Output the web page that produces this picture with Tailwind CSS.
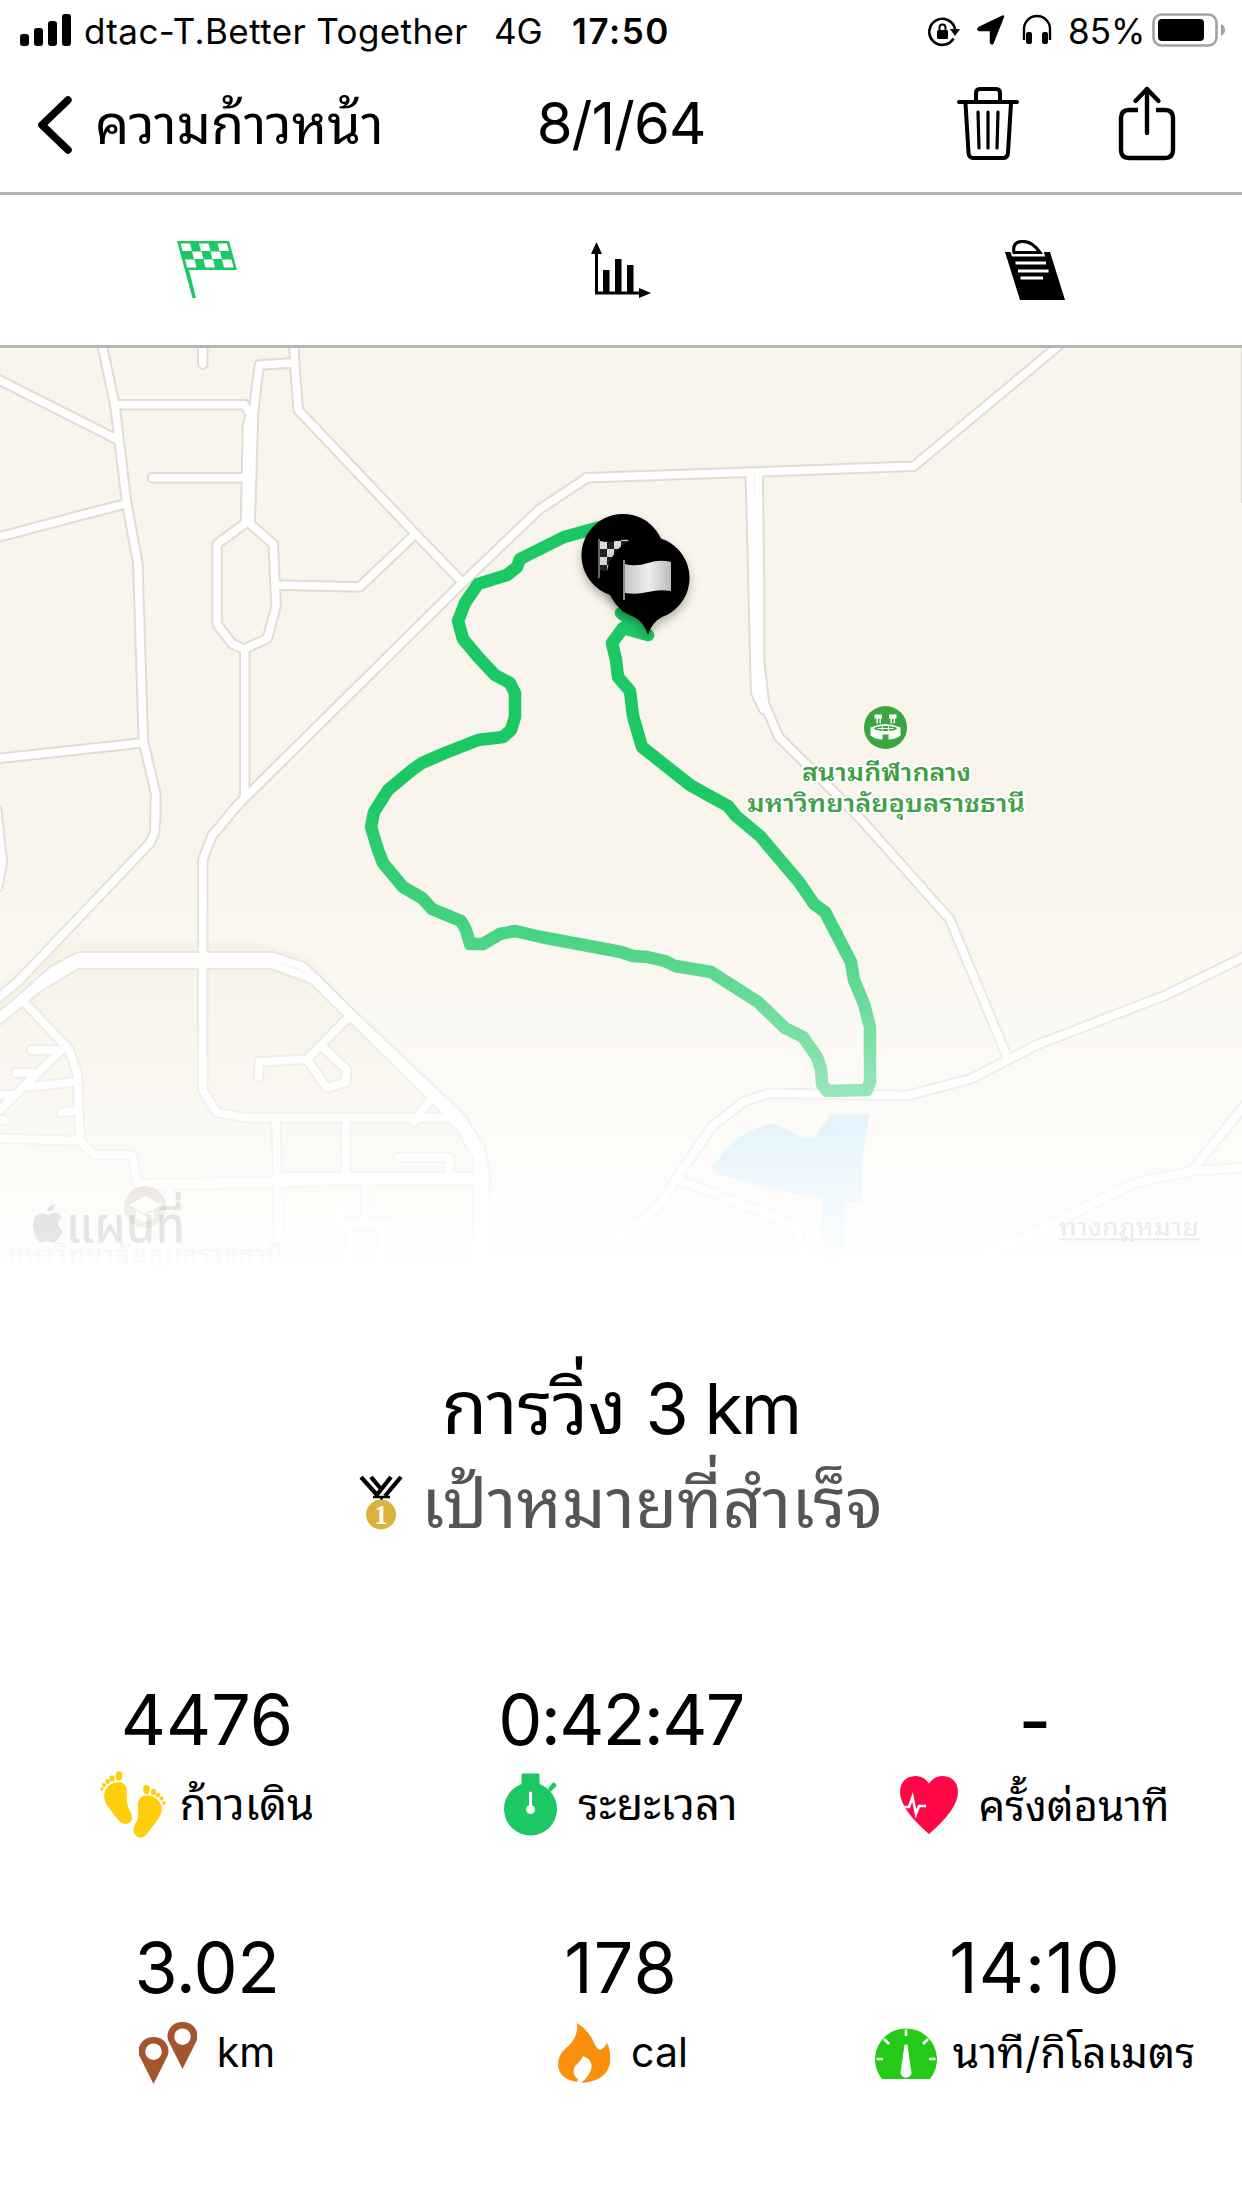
<!DOCTYPE html>
<html lang="th">
<head>
<meta charset="utf-8">
<title>8/1/64</title>
<script src="https://cdn.jsdelivr.net/npm/@tailwindcss/browser@4"></script>
</head>
<body class="w-[1242px] h-[2208px] overflow-hidden bg-white text-black font-['Inter','Noto_Sans_Thai_Looped','Loma','Garuda','Waree','Noto_Sans_Thai','Noto_Sans',sans-serif]">
<div class="flex flex-col w-[1242px] h-[2208px]">

<!-- status bar -->
<header class="flex items-center h-16 pl-5 pr-4 text-[35px] leading-none shrink-0">
  <svg class="-mt-1 w-[52px] h-8 shrink-0" viewBox="0 0 52 32"><rect x="0" y="20" width="9" height="12" rx="3"/><rect x="14" y="14" width="9" height="18" rx="3"/><rect x="28" y="7" width="9" height="25" rx="3"/><rect x="42" y="0" width="9" height="32" rx="3"/></svg>
  <span class="ml-3 -mt-0.5 w-[386px] whitespace-nowrap tracking-[0.4px]">dtac-T.Better Together</span>
  <span class="ml-[24px] -mt-0.5 w-[50px] whitespace-nowrap">4G</span>
  <span class="ml-[28px] -mt-0.5 font-semibold whitespace-nowrap tracking-[1.6px]">17:50</span>
  <div class="ml-auto flex items-center">
    <svg class="w-8 h-8" viewBox="0 0 32 32"><path d="M25.5 22.5A13 13 0 1 1 27 13" fill="none" stroke="#000" stroke-width="2.6"/><path d="M22 13h10l-5 7z"/><rect x="9" y="14" width="11" height="9" rx="1.5"/><path d="M11.500 14v-2.500a3 3 0 0 1 6 0v2.500" fill="none" stroke="#000" stroke-width="2"/></svg>
    <svg class="ml-4 -mt-1 w-[30px] h-8" viewBox="0 0 30 32"><path d="M27.500 2.500 17 29Q15.500 31 14.500 28.500V16.500H3Q.5 15.500 3 13.500L26 2.500Q27.500 1.500 27.500 2.500Z" stroke="#000" stroke-width="1.500" stroke-linejoin="round"/></svg>
    <svg class="ml-4 -mt-1 w-[30px] h-8" viewBox="0 0 30 32"><path d="M2 26V15a13 13 0 0 1 26 0v11" fill="none" stroke="#000" stroke-width="2.400"/><rect x="4" y="18" width="6" height="12" rx="2"/><rect x="20" y="18" width="6" height="12" rx="2"/></svg>
    <span class="ml-4 -mt-0.5 w-[76px] whitespace-nowrap">85%</span>
    <svg class="ml-2 -mt-1 w-[74px] h-9" viewBox="0 0 74 36"><rect x="1.500" y="2.500" width="63" height="31" rx="8" fill="none" stroke="#a1a49f" stroke-width="2.600"/><rect x="6" y="7" width="46" height="22" rx="4"/><path d="M69 12q4 2 4 6t-4 6z" fill="#a0a0a0"/></svg>
  </div>
</header>

<!-- navigation bar -->
<nav class="grid grid-cols-[1fr_auto_1fr] items-center h-[131px] border-b-[3px] border-[#b2b6b7] shrink-0 pb-2">
  <div class="flex items-center pl-[38px] pt-0.5">
    <svg class="w-9 h-[58px]" viewBox="0 0 36 58"><path d="M30 4 4 29 30 54" fill="none" stroke="#000" stroke-width="7.500" stroke-linecap="round" stroke-linejoin="round"/></svg>
    <span class="ml-[21px] text-[54px] leading-none whitespace-nowrap">ความก้าวหน้า</span>
  </div>
  <h1 class="text-[58px] leading-none -tracking-[1px] -mt-0.5">8/1/64</h1>
  <div class="flex items-center justify-end pr-[65px] gap-[98px] -mt-0.5">
    <svg class="w-[62px] h-[74px]" viewBox="0 0 62 74" fill="none" stroke="#000" stroke-width="4" stroke-linecap="round" stroke-linejoin="round"><path d="M2 16H60M19 16V7q0-4 4-4H39q4 0 4 4v9M8.500 17l3 50q.4 5 5 5H46q4.600 0 5-5l3-50"/><path d="M21 26l1 36M31 26V62M41 26l-1 36" stroke-width="3.200"/></svg>
    <svg class="w-[60px] h-[76px]" viewBox="0 0 60 76" fill="none" stroke="#000" stroke-width="4.400" stroke-linecap="round" stroke-linejoin="round"><path d="M21 25H12q-8 0-8 8v32q0 8 8 8H48q8 0 8-8V33q0-8-8-8H39" stroke-linecap="butt"/><path d="M30 48V4M18.500 16 30 4 41.500 16"/></svg>
  </div>
</nav>

<!-- tabs -->
<div class="grid grid-cols-3 items-center justify-items-center h-[153px] border-b-[3px] border-[#b2b6b7] shrink-0">
  <svg class="w-[60px] h-[60px]" viewBox="0 0 60 60"><path d="M0 1H52L60 30H12L19 58H15.500Z" fill="#1bc864"/><g fill="#fff"><path d="M3.500 3.500h9.500l2 7.500H5.500zM22 3.500h9.500l2 7.500h-9.500zM40.500 3.500H50l2 7.500h-9.500zM15 11.500h9.500l2 7.500h-9.500zM33.500 11.500H43l2 7.500h-9.500zM8 19.500h9.500l2 8H10zM26.500 19.500h9.500l2 8h-9.500zM45 19.500h9.500l2 8H47z"/></g></svg>
  <svg class="w-[60px] h-[58px]" viewBox="0 0 60 58"><path d="M5.500 10V52H50" fill="none" stroke="#000" stroke-width="3"/><path d="M0 13 5.500 1 11 13zM48 47 60 52 48 57zM12 29h6.500V51H12zM24 18h6.500V51H24zM36 24h6.500V51H36z"/></svg>
  <svg class="w-[60px] h-[60px]" viewBox="0 0 60 60"><path d="M0 12H5.500l1.500 4.500H40L39 12H45L60 60H15Z"/><path d="M9 12.500Q7 2 17 1.500T35 12.500Z" fill="#fff" stroke="#000" stroke-width="3.200"/><path d="M10.500 23H41M13 31H43.500M15.500 38H38" stroke="#fff" stroke-width="3"/></svg>
</div>

<!-- route map -->
<svg class="w-[1242px] h-[960px] shrink-0 font-['Noto_Sans_Thai_Looped','Loma','Garuda','Waree','Noto_Sans_Thai','Noto_Sans',sans-serif]" viewBox="0 348 1242 960">
  <defs>
    <linearGradient id="fade" gradientUnits="userSpaceOnUse" x1="0" y1="348" x2="0" y2="1308">
      <stop offset="0.460" stop-color="#fff" stop-opacity="0"/>
      <stop offset="0.606" stop-color="#fff" stop-opacity=".19"/>
      <stop offset="0.773" stop-color="#fff" stop-opacity=".54"/>
      <stop offset="0.875" stop-color="#fff" stop-opacity=".79"/>
      <stop offset="0.970" stop-color="#fff" stop-opacity="1"/>
    </linearGradient>
    <linearGradient id="cloth"><stop offset="0" stop-color="#c4c5c3"/><stop offset=".5" stop-color="#efefed"/><stop offset="1" stop-color="#bcbdba"/></linearGradient>
    <pattern id="check" width="14" height="16" patternUnits="userSpaceOnUse" x="600" y="541"><rect width="14" height="16" fill="#222"/><path d="M0 0h7v8H0zM7 8h7v8H7z" fill="#d9d9d6"/></pattern>
    <filter id="shadow" x="-40%" y="-40%" width="180%" height="180%"><feDropShadow dx="0" dy="5" stdDeviation="5" flood-color="#000" flood-opacity=".28"/></filter>
    <path id="pin" d="M-14 39A41.500 41.500 0 1 1 14 39Q4 44 0 57Q-4 44-14 39Z"/>
    <g id="roads" class="[&_path]:[vector-effect:non-scaling-stroke]" fill="none" stroke-linecap="round" stroke-linejoin="round">
      <g transform="translate(0 340) scale(.39605 .33333)">
        <path d="M255 0L290 195L320 490L348 670L362 1205L393 1360V1440"/>
        <path d="M-10 115L295 298M512 0V72M742 0L744 70L753 210L1048 580L1168 728"/>
        <path d="M744 68L655 75L648 135L640 220L632 540M290 194H618L632 225L625 255L620 540M385 413H635M-10 593L320 490"/>
        <path d="M625 545L548 612V852L585 910L616 928L675 895L697 800L690 612ZM697 735L908 741L1048 583M618 928V1370"/>
        <path d="M1484 412L1362 508L1168 728L600 1395M-10 1256L362 1208"/>
      </g>
      <g transform="translate(580 235) scale(.42219 .33333)">
        <path d="M15 728L400 712L790 694L1140 325M403 712L410 1035M422 712L425 1035"/>
      </g>
      <g transform="translate(621 640) scale(.39605 .42092)">
        <path d="M333-143L340 125L360 165M350-143L350 50L362 150L398 230L455 283L600 420L830 663L977 995"/>
        <path d="M-10 1425L95 1345L140 1280L230 1155L310 1097L373 1077L725 1082L885 1042L1050 962L1380 842L1580 750"/>
        <path d="M140 1280L445 1392L457 1480M870 1480L1060 1400L1300 1290L1440 1262L1580 1253M1440 1262L1580 1100"/>
      </g>
      <g transform="translate(0 800) scale(.39605 .33333)">
        <path d="M392 0L391 95L378 130L45 545L-10 600M600 15L535 108L512 178V870L547 938L620 953H1150"/>
        <path d="M-10 660L60 590L135 510L200 470H690L765 500L800 540L885 640L1165 955L1212 1045L1225 1120V1400M-10 666L100 560L195 492H685L790 538L1090 890L1165 985L1205 1070V1380"/>
        <path d="M60 605L175 750L195 820L202 1020M80 750H155L-10 940M40 818H85M75 860L195 845M-10 885H30M155 938L198 930M-10 960H10"/>
        <path d="M-10 1015L202 1022L238 1065H333L350 1155L690 1150L870 1140H1220M350 1153L703 1143M430 1155V1230"/>
        <path d="M697 955L703 1320M873 955V1135M1005 1072H1135V1135M705 1130H1220M922 1150V1270M860 1230V1272H980M885 1275V1390M965 1275V1390M1090 895L1045 965"/>
        <path d="M885 645L775 778L655 785L653 830M812 738L875 808L873 848L825 863L775 778M-8 30L6 185L-5 260"/>
      </g>
    </g>
  </defs>
  <rect y="348" width="1242" height="960" fill="#f9f5ec"/>
  <path d="M0 980L59 943L251 941L309 957L350 1003L467 1113L493 1170V1308H0Z" fill="#f4efe0"/>
  <path transform="translate(621 640) scale(.39605 .42092)" d="M530 1127H628L606 1250L610 1275L605 1336L567 1335L555 1490L508 1480V1328L380 1305L235 1268L228 1255L265 1208L320 1167L385 1148L455 1180L488 1181Z" fill="#b8e1f6"/>
  <use href="#roads" stroke="#e1ddd3" stroke-width="11.500"/>
  <use href="#roads" stroke="#fff" stroke-width="7.500"/>
  <path d="M1241.500 348V503" stroke="#e1ddd3" stroke-width="1"/>

  <path d="M600 527L564 537L520 559L517 567L507 575L478 584L465 603L458 621L463 639L479 658L495 675L510 683L515 693V717L511 730L503 737L478 740L445 753L422 763L412 770L388 790L374 812L371 827L378 850L383 863L403 887L422 898L432 909L461 921L466 930L470 944H483L500 934L515 931L541 937L621 952L633 956L647 957L665 961L675 966L711 972L758 1002L785 1028L803 1037L817 1057L821 1069L822 1084L827 1091L867 1090L870 1082V1027L864 1004L854 980L851 962L825 912L814 904L799 882L760 836L736 816L728 806L706 794L690 785L642 747L633 716L630 691L618 677L616 660L612 643L623 628L648 635L621 613" fill="none" stroke="#1bc864" stroke-width="12.500" stroke-linejoin="round" stroke-linecap="round"/>

  <g transform="translate(885.5 727.5)"><circle r="21.500" fill="#3aa640"/><g fill="#fff"><path d="M-15 0Q0-7 15 0V8Q10 12 3 12V7H-3V12Q-10 12-15 8Z"/><path d="M-11-13h7.500v4H-11zM3.500-13H11v4H3.500zM-9-9h1.500v5H-9zM-6-9h1.500v5H-6zM5-9h1.500v5H5zM8-9h1.500v5H8z"/></g><ellipse cy="1" rx="11.500" ry="2.600" fill="#3aa640"/><path d="M-8 1H8M-3-1V3M3-1V3" stroke="#fff" stroke-width="1"/></g>
  <g fill="#3d9f42" stroke="#fff" stroke-width="4" stroke-linejoin="round" paint-order="stroke" font-size="25" font-weight="600">
    <text x="802" y="781" textLength="169" lengthAdjust="spacingAndGlyphs">สนามกีฬากลาง</text>
    <text x="747" y="812" textLength="278" lengthAdjust="spacingAndGlyphs">มหาวิทยาลัยอุบลราชธานี</text>
  </g>

  <g transform="translate(145 1207)"><circle r="21" fill="#a3946a"/><path d="M-16-2L0-11 16-2 0 7ZM-9 4v7q9 7 18 0V4L0 9Z" fill="#fff"/></g>
  <text x="7" y="1263" font-size="25" font-weight="600" fill="#a38a4c" textLength="276" lengthAdjust="spacingAndGlyphs">มหาวิทยาลัยอุบลราชธานี</text>
  <rect y="348" width="1242" height="960" fill="url(#fade)"/>
  <g fill="#5f6c66" opacity=".15">
    <path d="M48 1215Q55 1210 62 1216Q54 1224 63 1231Q57 1245 50 1242Q47 1240 43 1242Q36 1244 33 1227Q33 1213 43 1213Q46 1214 48 1215ZM47 1212Q47 1206 55 1204Q55 1211 47 1212Z"/>
    <text class="font-['Noto_Sans_Thai','Noto_Sans',sans-serif]" x="66" y="1242" font-size="49" font-weight="500" textLength="119" lengthAdjust="spacingAndGlyphs">แผนที่</text>
  </g>
  <g fill="#5f6c66" opacity=".12"><text x="1059" y="1236" font-size="25" font-weight="500" textLength="140" lengthAdjust="spacingAndGlyphs">ทางกฎหมาย</text><rect x="1058" y="1238.500" width="143" height="1.800"/></g>

  <use href="#pin" transform="translate(623 555.5)" filter="url(#shadow)"/>
  <path d="M600 541Q608 543 616 541T632 540V568Q620 568 614 570T600 570Z" fill="url(#check)"/>
  <path d="M599 539V578" stroke="#8b8b88" stroke-width="1.500"/>
  <use href="#pin" transform="translate(648 578)" filter="url(#shadow)"/>
  <path d="M625 564Q636 567 648 563T671 562V591Q660 589 648 592T625 593Z" fill="url(#cloth)"/>
  <path d="M624 560V600" stroke="#9b9b98" stroke-width="1.800"/>
</svg>

<!-- workout title -->
<section class="flex flex-col items-center shrink-0 h-[340px] pt-[58px]">
  <h2 class="flex items-baseline gap-[19px] h-[82px] text-[70px] leading-[82px] whitespace-nowrap"><span class="text-[74px]">การวิ่ง</span><span class="-tracking-[2px]">3 km</span></h2>
  <div class="flex items-center h-[110px] gap-[17px]">
    <svg class="w-[45px] h-[54px]" viewBox="0 0 45 54"><path d="M2 1 19 20M42 1 26 20M12 1 22 13M32 1 17 20" stroke="#000" stroke-width="4.200" fill="none"/><path d="M14 21H31M22.500 20V26" stroke="#000" stroke-width="2.500"/><circle cx="22" cy="38.500" r="15" fill="#dab23c"/><text x="22" y="48" font-size="27" font-weight="700" fill="#fff" text-anchor="middle" class="font-['Liberation_Serif',serif]">1</text></svg>
    <p class="text-[69px] leading-[108px] text-[#555] whitespace-nowrap">เป้าหมายที่สำเร็จ</p>
  </div>
</section>

<!-- statistics -->
<section class="grid grid-cols-3 shrink-0 text-[43.5px] pt-[17px]">
  <div class="flex flex-col items-center h-[248px]">
    <div class="h-[100px] text-[70px] leading-[110px]">4476</div>
    <div class="flex items-center h-[80px] gap-3.5"><svg class="w-[66px] h-[68px]" viewBox="0 0 66 68" fill="#ffce0a"><path d="M14 11.500Q26 9 27 20Q26 29 28 36Q33 44 32 49Q26 57 18 49L6 33Q0 18 14 11.500Z"/><path d="M43 25Q57 22 62 36Q62 44 56 51L46 64Q39 70 34 62Q32 56 37 50Q39 43 38 36Q37 28 43 25Z"/><ellipse cx="19" cy="5" rx="3.400" ry="4.800"/><ellipse cx="12" cy="7.500" rx="2.600" ry="3.200"/><circle cx="7.500" cy="10.500" r="2.400"/><circle cx="4" cy="14" r="2"/><circle cx="2" cy="18" r="1.700"/><ellipse cx="46.500" cy="18.500" rx="3.400" ry="4.800"/><ellipse cx="53.500" cy="21" rx="2.600" ry="3.200"/><circle cx="58" cy="24" r="2.300"/><circle cx="61.500" cy="27.500" r="2"/><circle cx="64" cy="32" r="1.800"/></svg><span class="whitespace-nowrap">ก้าวเดิน</span></div>
  </div>
  <div class="flex flex-col items-center h-[248px]">
    <div class="h-[100px] text-[70px] leading-[110px] -tracking-[1.7px]">0:42:47</div>
    <div class="flex items-center h-[80px] gap-5"><svg class="w-[54px] h-[64px]" viewBox="0 0 54 64"><circle cx="26.500" cy="36" r="26.500" fill="#1bc864"/><path d="M17.500 2q0-1.500 1.500-1.500H34q1.500 0 1.500 1.500V14h-18zM44 15.500 49 9.500q3 0 3.500 3.500L46.500 19z" fill="#1bc864"/><path d="M26.500 20V36" stroke="#fff" stroke-width="3" stroke-linecap="round"/><circle cx="26.500" cy="36.500" r="4.500" fill="#fff"/></svg><span class="whitespace-nowrap">ระยะเวลา</span></div>
  </div>
  <div class="flex flex-col items-center h-[248px]">
    <div class="h-[100px] text-[70px] leading-[112px] font-medium">-</div>
    <div class="flex items-center h-[80px] gap-5 text-[42px]"><svg class="w-[58px] h-[58px]" viewBox="0 0 58 58"><path d="M29 7.500Q34 0 43 0Q58 1 58 17Q57 34 29 58Q1 34 0 17Q0 1 15 0Q24 0 29 7.500Z" fill="#ff0746"/><path d="M4 31H9L12.500 21 16 38 19 30H26" fill="none" stroke="#fff" stroke-width="2.600"/></svg><span class="whitespace-nowrap">ครั้งต่อนาที</span></div>
  </div>
  <div class="flex flex-col items-center h-[248px]">
    <div class="h-[100px] text-[70px] leading-[110px] -tracking-[0.5px]">3.02</div>
    <div class="flex items-center h-[80px] gap-5 text-[41px]"><svg class="w-[58px] h-[62px]" viewBox="0 0 58 62" fill="#a3552f" fill-rule="evenodd"><path d="M14.500 15A14.500 14 0 0 1 27.500 36L14.500 62 1.500 36A14.500 14 0 0 1 14.500 15ZM14.500 21.500a8.200 8.200 0 1 0 .01 0ZM43.500 0A14.500 14 0 0 1 56.500 21L43.500 47 30.500 21A14.500 14 0 0 1 43.500 0ZM43.500 6.500a8.200 8.200 0 1 0 .01 0Z"/></svg><span>km</span></div>
  </div>
  <div class="flex flex-col items-center h-[248px]">
    <div class="h-[100px] text-[70px] leading-[110px] tracking-[1px]">178</div>
    <div class="flex items-center h-[80px] gap-5 pl-1 text-[41px]"><svg class="w-[53px] h-[60px]" viewBox="0 0 53 60"><path d="M19 0Q32 8 37 22Q41 29 44 26Q47 24 49 20Q53 27 52 40Q49 58 23 60Q36 49 33 40Q31 35 25 33Q23 38 17 43Q13 51 20 56L19 59Q1 56 0 42Q0 32 7 26Q21 15 19 0Z" fill="#f98f0b"/></svg><span>cal</span></div>
  </div>
  <div class="flex flex-col items-center h-[248px]">
    <div class="h-[100px] text-[70px] leading-[110px] tracking-[1px]">14:10</div>
    <div class="flex items-center h-[80px] gap-4 text-[42.5px]"><svg class="w-[62px] h-[52px]" viewBox="0 0 62 52"><path d="M7 52A31 31 0 1 1 55 52Z" fill="#25ca19"/><path d="M31 2.500V9M9 12l5 5M53 12l-5 5M1.500 32H8M60.500 32H54" stroke="#fff" stroke-width="2.600"/><path d="M29.500 17.500h3L36 43a5.500 5.500 0 1 1-10 0Z" fill="#fff"/></svg><span class="whitespace-nowrap">นาที/กิโลเมตร</span></div>
  </div>
</section>
</div>
</body>
</html>
